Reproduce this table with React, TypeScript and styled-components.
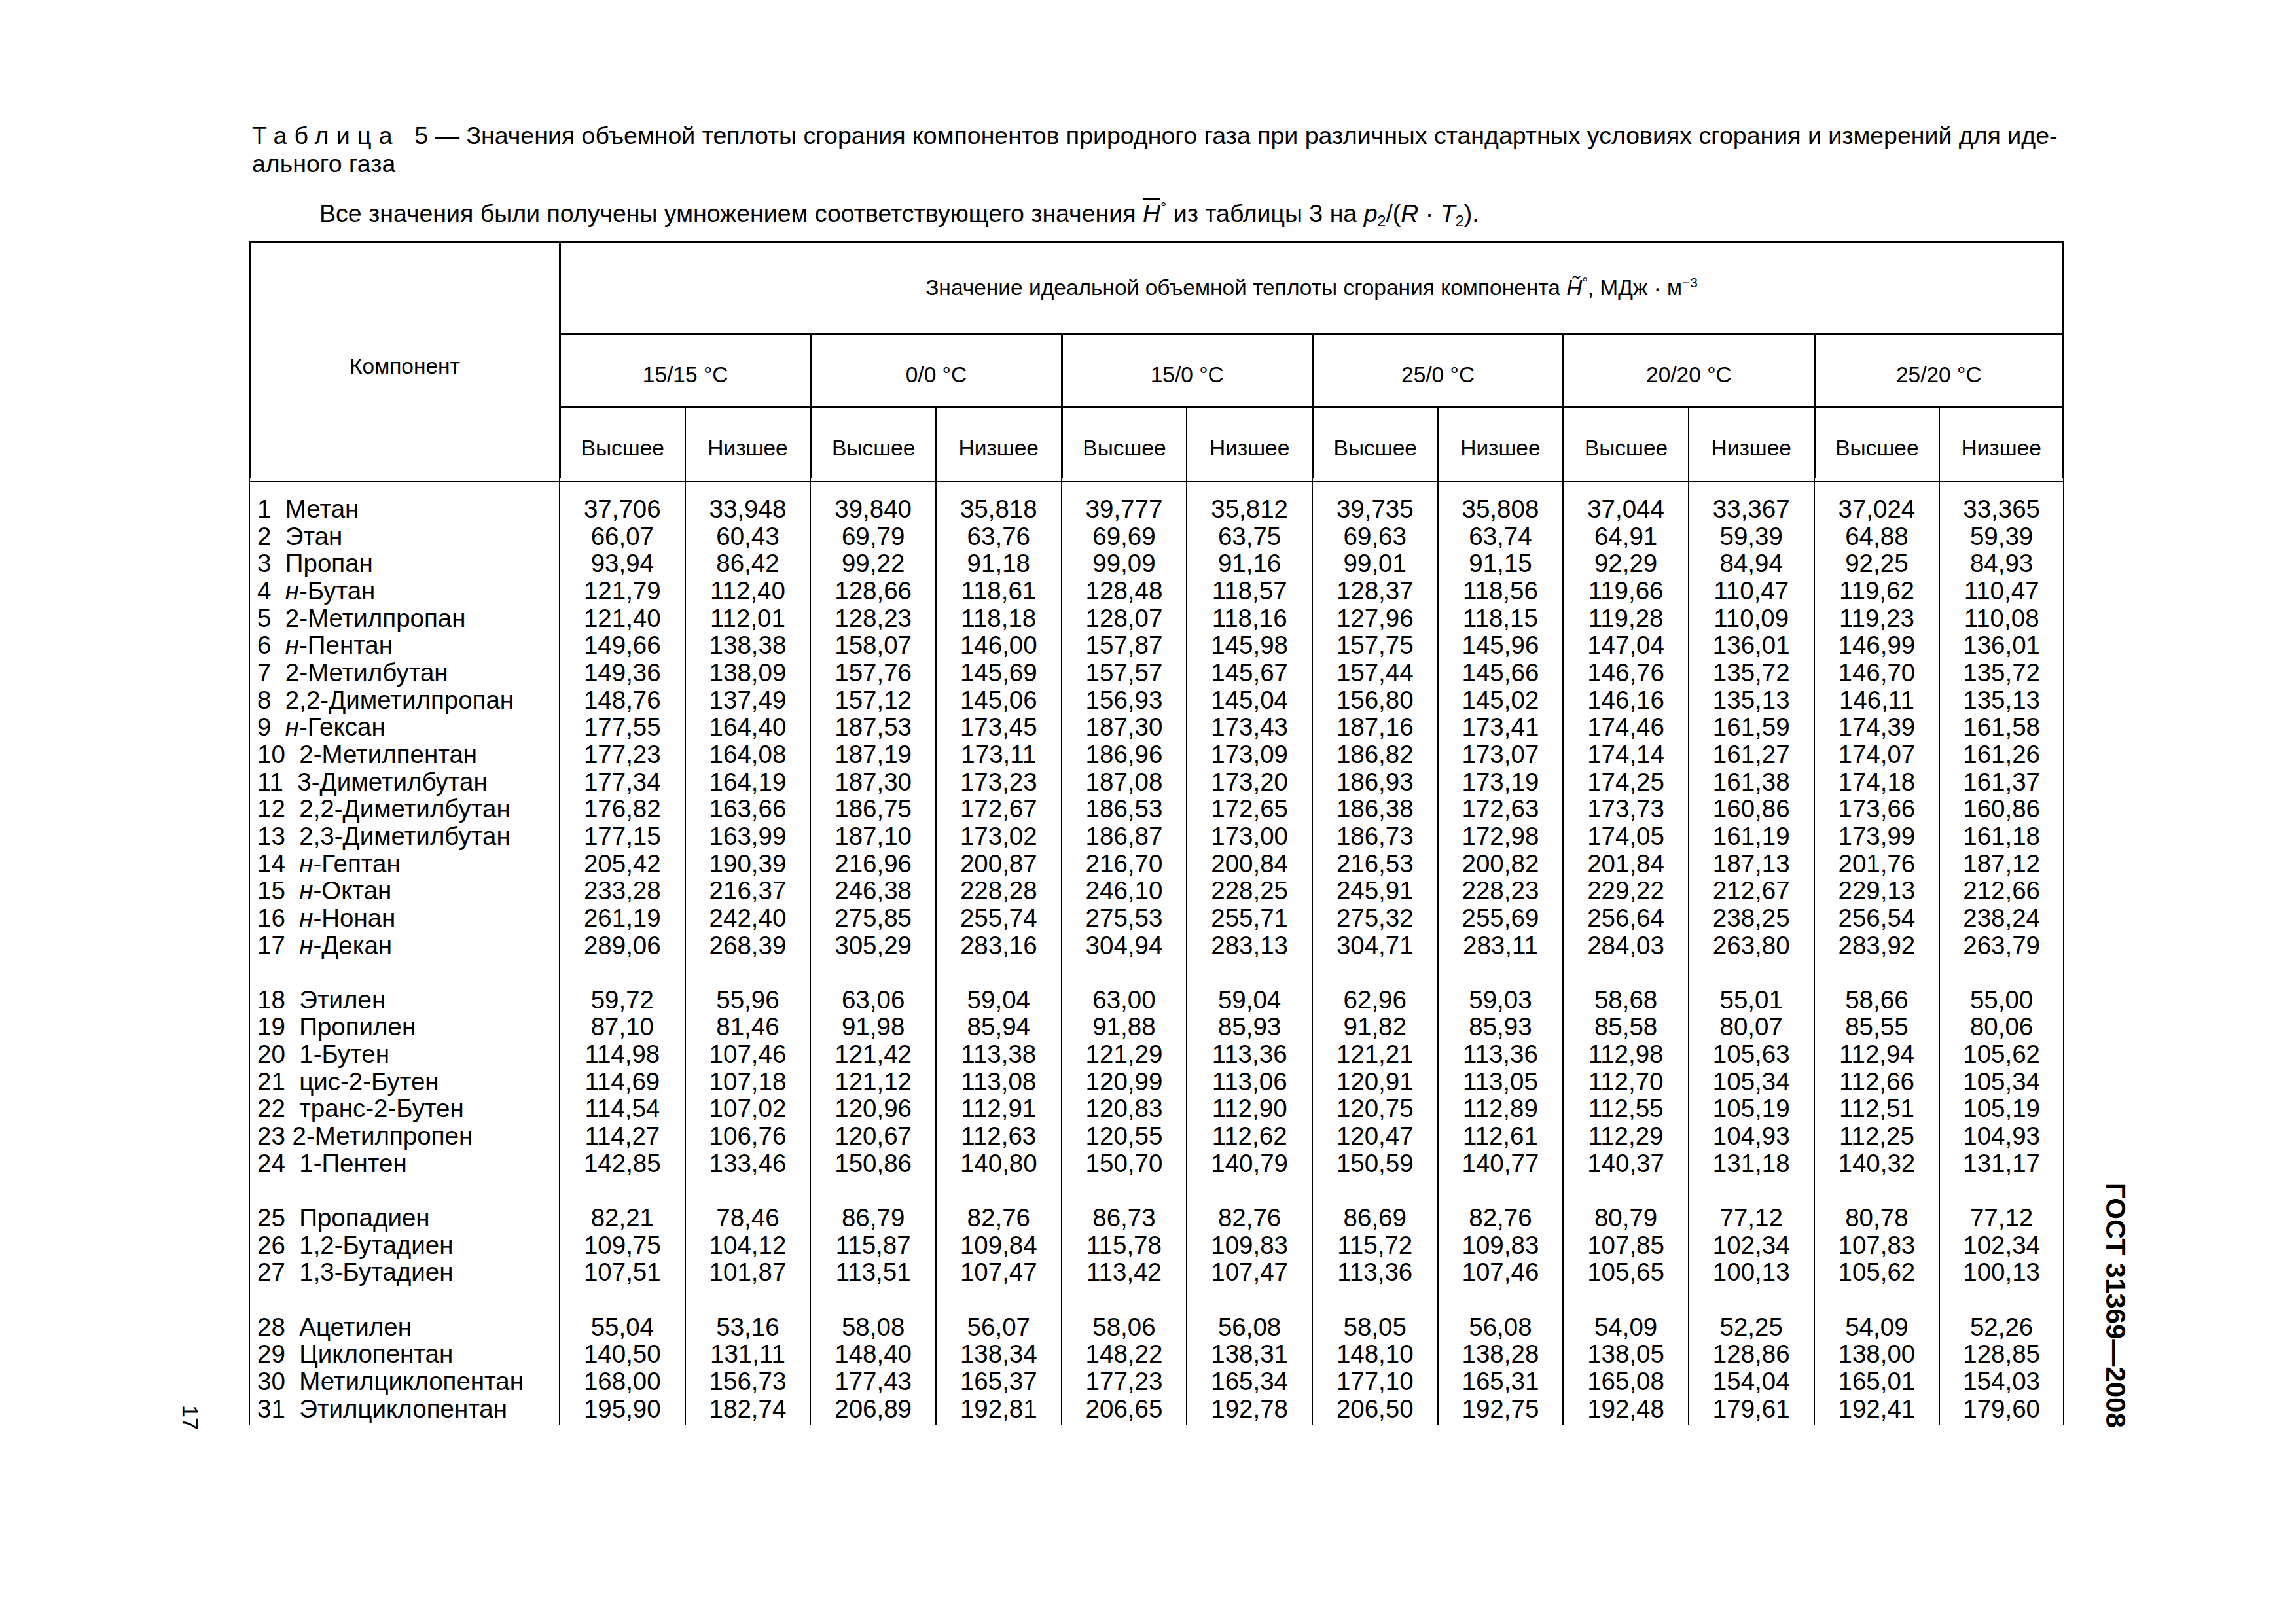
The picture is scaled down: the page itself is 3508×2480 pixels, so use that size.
import React, {Fragment} from 'react';
import styled, {createGlobalStyle} from "styled-components";

const groups = ["15/15 °C", "0/0 °C", "15/0 °C", "25/0 °C", "20/20 °C", "25/20 °C"];

// each section is separated by an empty row in the table
const sections: [string, string][][] = [
  [
    ["1  Метан", "37,706 33,948 39,840 35,818 39,777 35,812 39,735 35,808 37,044 33,367 37,024 33,365"],
    ["2  Этан", "66,07 60,43 69,79 63,76 69,69 63,75 69,63 63,74 64,91 59,39 64,88 59,39"],
    ["3  Пропан", "93,94 86,42 99,22 91,18 99,09 91,16 99,01 91,15 92,29 84,94 92,25 84,93"],
    ["4  н-Бутан", "121,79 112,40 128,66 118,61 128,48 118,57 128,37 118,56 119,66 110,47 119,62 110,47"],
    ["5  2-Метилпропан", "121,40 112,01 128,23 118,18 128,07 118,16 127,96 118,15 119,28 110,09 119,23 110,08"],
    ["6  н-Пентан", "149,66 138,38 158,07 146,00 157,87 145,98 157,75 145,96 147,04 136,01 146,99 136,01"],
    ["7  2-Метилбутан", "149,36 138,09 157,76 145,69 157,57 145,67 157,44 145,66 146,76 135,72 146,70 135,72"],
    ["8  2,2-Диметилпропан", "148,76 137,49 157,12 145,06 156,93 145,04 156,80 145,02 146,16 135,13 146,11 135,13"],
    ["9  н-Гексан", "177,55 164,40 187,53 173,45 187,30 173,43 187,16 173,41 174,46 161,59 174,39 161,58"],
    ["10  2-Метилпентан", "177,23 164,08 187,19 173,11 186,96 173,09 186,82 173,07 174,14 161,27 174,07 161,26"],
    ["11  3-Диметилбутан", "177,34 164,19 187,30 173,23 187,08 173,20 186,93 173,19 174,25 161,38 174,18 161,37"],
    ["12  2,2-Диметилбутан", "176,82 163,66 186,75 172,67 186,53 172,65 186,38 172,63 173,73 160,86 173,66 160,86"],
    ["13  2,3-Диметилбутан", "177,15 163,99 187,10 173,02 186,87 173,00 186,73 172,98 174,05 161,19 173,99 161,18"],
    ["14  н-Гептан", "205,42 190,39 216,96 200,87 216,70 200,84 216,53 200,82 201,84 187,13 201,76 187,12"],
    ["15  н-Октан", "233,28 216,37 246,38 228,28 246,10 228,25 245,91 228,23 229,22 212,67 229,13 212,66"],
    ["16  н-Нонан", "261,19 242,40 275,85 255,74 275,53 255,71 275,32 255,69 256,64 238,25 256,54 238,24"],
    ["17  н-Декан", "289,06 268,39 305,29 283,16 304,94 283,13 304,71 283,11 284,03 263,80 283,92 263,79"],
  ],
  [
    ["18  Этилен", "59,72 55,96 63,06 59,04 63,00 59,04 62,96 59,03 58,68 55,01 58,66 55,00"],
    ["19  Пропилен", "87,10 81,46 91,98 85,94 91,88 85,93 91,82 85,93 85,58 80,07 85,55 80,06"],
    ["20  1-Бутен", "114,98 107,46 121,42 113,38 121,29 113,36 121,21 113,36 112,98 105,63 112,94 105,62"],
    ["21  цис-2-Бутен", "114,69 107,18 121,12 113,08 120,99 113,06 120,91 113,05 112,70 105,34 112,66 105,34"],
    ["22  транс-2-Бутен", "114,54 107,02 120,96 112,91 120,83 112,90 120,75 112,89 112,55 105,19 112,51 105,19"],
    ["23 2-Метилпропен", "114,27 106,76 120,67 112,63 120,55 112,62 120,47 112,61 112,29 104,93 112,25 104,93"],
    ["24  1-Пентен", "142,85 133,46 150,86 140,80 150,70 140,79 150,59 140,77 140,37 131,18 140,32 131,17"],
  ],
  [
    ["25  Пропадиен", "82,21 78,46 86,79 82,76 86,73 82,76 86,69 82,76 80,79 77,12 80,78 77,12"],
    ["26  1,2-Бутадиен", "109,75 104,12 115,87 109,84 115,78 109,83 115,72 109,83 107,85 102,34 107,83 102,34"],
    ["27  1,3-Бутадиен", "107,51 101,87 113,51 107,47 113,42 107,47 113,36 107,46 105,65 100,13 105,62 100,13"],
  ],
  [
    ["28  Ацетилен", "55,04 53,16 58,08 56,07 58,06 56,08 58,05 56,08 54,09 52,25 54,09 52,26"],
    ["29  Циклопентан", "140,50 131,11 148,40 138,34 148,22 138,31 148,10 138,28 138,05 128,86 138,00 128,85"],
    ["30  Метилциклопентан", "168,00 156,73 177,43 165,37 177,23 165,34 177,10 165,31 165,08 154,04 165,01 154,03"],
    ["31  Этилциклопентан", "195,90 182,74 206,89 192,81 206,65 192,78 206,50 192,75 192,48 179,61 192,41 179,60"],
  ],
];

const subCols = groups.flatMap(() => ["Высшее", "Низшее"]);

const renderName = (label: string) => {
  const m = label.match(/^(\d+\s+)н-(.*)$/);
  if (!m) return label;
  return (
    <>
      {m[1]}<Var>н</Var>-{m[2]}
    </>
  );
};

const App = () => {
  const lastSection = sections.length - 1;
  return (
    <>
      <GlobalStyle/>
      <Page>
        <Sheet>
          <LeftMargin>
            <PageNumber>17</PageNumber>
          </LeftMargin>
          <Main>
            <Caption>
              <CaptionLine>
                <Spaced>Таблица</Spaced> 5 — Значения объемной теплоты сгорания компонентов природного газа при различных стандартных условиях сгорания и измерений для иде-
              </CaptionLine>
              <div>ального газа</div>
            </Caption>
            <Note>
              Все значения были получены умножением соответствующего значения <Bar>H</Bar><Sup>°</Sup> из таблицы 3 на <Var>p</Var><Sub>2</Sub>/(<Var>R</Var> · <Var>T</Var><Sub>2</Sub>).
            </Note>
            <Table>
              <colgroup>
                <col style={{width: 474}}/>
                {subCols.map((_, i) => <col key={i}/>)}
              </colgroup>
              <thead>
                <tr>
                  <CornerCell rowSpan={3}>Компонент</CornerCell>
                  <TitleCell colSpan={12}>
                    Значение идеальной объемной теплоты сгорания компонента <Var>H&#771;</Var><Sup>°</Sup>, МДж · м<Sup>−3</Sup>
                  </TitleCell>
                </tr>
                <tr>
                  {groups.map((g, i) => (
                    <GroupCell key={g} colSpan={2} $last={i === groups.length - 1}>{g}</GroupCell>
                  ))}
                </tr>
                <tr>
                  {subCols.map((s, i) => (
                    <SubCell key={i} $thin={i % 2 === 1} $last={i === subCols.length - 1}>{s}</SubCell>
                  ))}
                </tr>
                <tr>
                  <GapCell/>
                  {subCols.map((_, i) => <GapCell key={i} $last={i === subCols.length - 1}/>)}
                </tr>
              </thead>
              <tbody>
                {sections.map((rows, si) => (
                  <Fragment key={si}>
                    {rows.map(([label, values], ri) => {
                      const first = si === 0 && ri === 0;
                      const last = si === lastSection && ri === rows.length - 1;
                      return (
                        <tr key={label}>
                          <NameCell $first={first} $end={last}>{renderName(label)}</NameCell>
                          {values.split(" ").map((v, i) => (
                            <ValueCell key={i} $first={first} $end={last} $last={i === 11}>{v}</ValueCell>
                          ))}
                        </tr>
                      );
                    })}
                    {si < lastSection && (
                      <tr>
                        <NameCell/>
                        {subCols.map((_, i) => <ValueCell key={i} $last={i === 11}/>)}
                      </tr>
                    )}
                  </Fragment>
                ))}
              </tbody>
            </Table>
          </Main>
          <RightMargin>
            <DocCode>ГОСТ 31369—2008</DocCode>
          </RightMargin>
        </Sheet>
      </Page>
    </>
  );
};

const GlobalStyle = createGlobalStyle`
  html, body {
    margin: 0;
    padding: 0;
    background: #fff;
  }
  body {
    font-family: "Liberation Sans", Arial, sans-serif;
    color: #000;
  }
`;
const Page = styled.div`
  width: 3508px;
  height: 2480px;
  box-sizing: border-box;
  padding-top: 186px;
  background: #fff;
`;
const Sheet = styled.div`
  display: flex;
  align-items: stretch;
`;
const LeftMargin = styled.div`
  width: 380px;
  box-sizing: border-box;
  padding-left: 274px;
  display: flex;
  flex-direction: column;
  justify-content: flex-end;
  align-items: flex-start;
`;
const PageNumber = styled.div`
  writing-mode: vertical-rl;
  font-size: 34px;
  line-height: 34px;
  margin-bottom: -8px;
`;
const RightMargin = styled.div`
  padding-left: 57px;
  display: flex;
  flex-direction: column;
  justify-content: flex-end;
  align-items: flex-start;
`;
const DocCode = styled.div`
  writing-mode: vertical-rl;
  font-size: 42px;
  font-weight: 700;
  line-height: 42px;
  white-space: nowrap;
  margin-bottom: -4px;
`;
const Main = styled.div`
  width: 2774px;
  display: flex;
  flex-direction: column;
`;
const Caption = styled.div`
  padding-left: 5px;
  font-size: 37.5px;
  line-height: 43px;
`;
const CaptionLine = styled.div`
  white-space: nowrap;
`;
const Spaced = styled.span`
  letter-spacing: 0.3em;
  margin-right: 12px;
`;
const Note = styled.div`
  margin-top: 33px;
  padding-left: 108px;
  font-size: 37.5px;
  line-height: 43px;
  white-space: nowrap;
`;
const Var = styled.i`
  font-style: italic;
`;
const Bar = styled.i`
  font-style: italic;
  text-decoration: overline;
  text-decoration-thickness: 2px;
`;
const Sup = styled.span`
  font-size: 0.62em;
  vertical-align: 0.6em;
  line-height: 0;
`;
const Sub = styled.span`
  font-size: 0.62em;
  vertical-align: -0.3em;
  line-height: 0;
`;
const Table = styled.table`
  margin-top: 20px;
  width: 2774px;
  table-layout: fixed;
  border-collapse: separate;
  border-spacing: 0;
`;
const HeadCell = styled.th`
  box-sizing: border-box;
  padding: 0;
  font-size: 33.5px;
  font-weight: 400;
  text-align: center;
  vertical-align: middle;
  border-top: 3px solid #000;
  border-left: 3px solid #000;
`;
const CornerCell = styled(HeadCell)`
  padding-top: 18px;
  border-bottom: 1px solid #000;
`;
const TitleCell = styled(HeadCell)`
  height: 141px;
  border-right: 3px solid #000;
`;
const GroupCell = styled(HeadCell)<{ $last?: boolean }>`
  height: 112px;
  padding-top: 12px;
  border-right: ${p => (p.$last ? "3px solid #000" : "none")};
`;
const SubCell = styled(HeadCell)<{ $thin?: boolean; $last?: boolean }>`
  height: 110px;
  padding-top: 14px;
  border-left-width: ${p => (p.$thin ? "2px" : "3px")};
  border-right: ${p => (p.$last ? "3px solid #000" : "none")};
`;
const GapCell = styled.td<{ $last?: boolean }>`
  box-sizing: border-box;
  height: 5px;
  padding: 0;
  border-left: 2px solid #000;
  border-bottom: 1px solid #000;
  border-right: ${p => (p.$last ? "2px solid #000" : "none")};
`;
const BodyCell = styled.td<{ $first?: boolean; $end?: boolean }>`
  box-sizing: border-box;
  height: 41.66px;
  padding: ${p => (p.$first ? "21px" : "0")} 0 ${p => (p.$end ? "4px" : "0")};
  font-size: 38.5px;
  line-height: 41.66px;
  border-left: 2px solid #000;
  white-space: pre;
`;
const NameCell = styled(BodyCell)`
  padding-left: 11px;
  text-align: left;
`;
const ValueCell = styled(BodyCell)<{ $last?: boolean }>`
  text-align: center;
  border-right: ${p => (p.$last ? "2px solid #000" : "none")};
`;

export default App;
